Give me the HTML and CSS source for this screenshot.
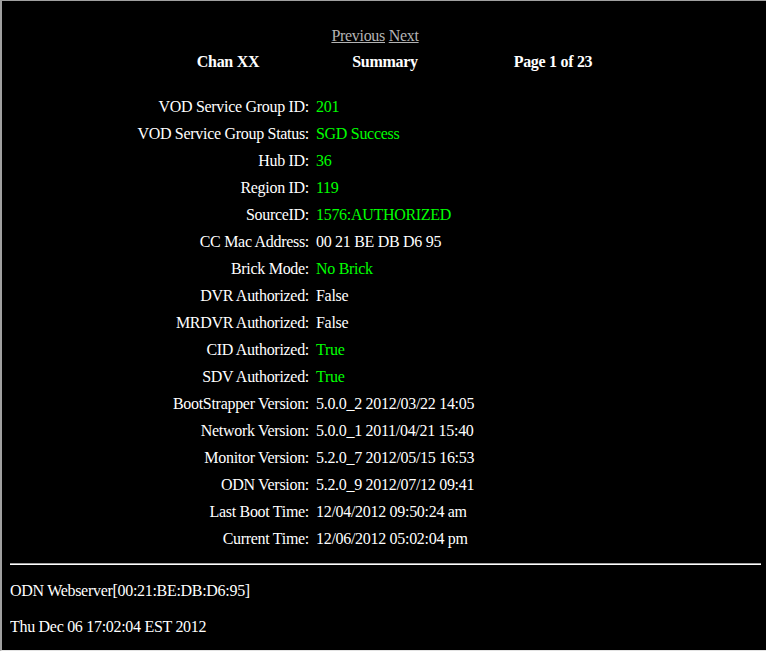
FILE: index.html
```html
<!DOCTYPE html>
<html>
<head>
<meta charset="utf-8">
<title>ODN Webserver</title>
<link rel="stylesheet" href="styles.css">
</head>
<body>
<div class="nav"><a href="#">Previous</a> <a href="#">Next</a></div>
<div class="head">
  <div class="hcell">Chan XX</div>
  <div class="hcell">Summary</div>
  <div class="hcell">Page 1 of 23</div>
</div>
<div class="rows">
  <div class="lbl">VOD Service Group ID:</div><div class="val ok">201</div>
  <div class="lbl">VOD Service Group Status:</div><div class="val ok">SGD Success</div>
  <div class="lbl">Hub ID:</div><div class="val ok">36</div>
  <div class="lbl">Region ID:</div><div class="val ok">119</div>
  <div class="lbl">SourceID:</div><div class="val ok">1576:AUTHORIZED</div>
  <div class="lbl">CC Mac Address:</div><div class="val">00 21 BE DB D6 95</div>
  <div class="lbl">Brick Mode:</div><div class="val ok">No Brick</div>
  <div class="lbl">DVR Authorized:</div><div class="val">False</div>
  <div class="lbl">MRDVR Authorized:</div><div class="val">False</div>
  <div class="lbl">CID Authorized:</div><div class="val ok">True</div>
  <div class="lbl">SDV Authorized:</div><div class="val ok">True</div>
  <div class="lbl">BootStrapper Version:</div><div class="val">5.0.0_2 2012/03/22 14:05</div>
  <div class="lbl">Network Version:</div><div class="val">5.0.0_1 2011/04/21 15:40</div>
  <div class="lbl">Monitor Version:</div><div class="val">5.2.0_7 2012/05/15 16:53</div>
  <div class="lbl">ODN Version:</div><div class="val">5.2.0_9 2012/07/12 09:41</div>
  <div class="lbl">Last Boot Time:</div><div class="val">12/04/2012 09:50:24 am</div>
  <div class="lbl">Current Time:</div><div class="val">12/06/2012 05:02:04 pm</div>
</div>
<hr class="rule">
<div class="foot">ODN Webserver[00:21:BE:DB:D6:95]</div>
<div class="foot foot2">Thu Dec 06 17:02:04 EST 2012</div>
</body>
</html>
```
FILE: styles.css
```css
html {
  height: 100%;
  box-sizing: border-box;
  border-left: 2px solid #a0a0a0;
  border-top: 1px solid #a0a0a0;
  border-bottom: 1px solid #e3e3e3;
  background: #000;
  overflow: hidden;
}
body {
  margin: 0 5px 0 8px;
  padding-top: 26px;
  background: #000;
  color: #fff;
  font-family: "Liberation Serif", "Times New Roman", serif;
  font-size: 16px;
  line-height: 18px;
  letter-spacing: -0.3px;
}
.nav {
  text-align: center;
  padding-right: 21px;
}
.nav a {
  color: #b4b4b4;
  text-decoration: underline;
}
.head {
  margin-top: 8px;
  padding-left: 138px;
  display: grid;
  grid-template-columns: 160px 154px 182px;
  font-weight: bold;
}
.hcell {
  text-align: center;
}
.rows {
  margin-top: 22px;
  display: grid;
  grid-template-columns: 299px 1fr;
  column-gap: 7px;
  grid-auto-rows: 27px;
  line-height: 27px;
}
.lbl {
  text-align: right;
  white-space: nowrap;
}
.val {
  white-space: nowrap;
}
.ok {
  color: #00ff00;
}
.rule {
  margin: 11px 0 0 0;
  height: 0;
  border: 0;
  border-top: 1px solid #a0a0a0;
  border-bottom: 1px solid #ffffff;
}
.foot {
  margin-top: 17px;
}
.foot2 {
  margin-top: 18px;
}
```
